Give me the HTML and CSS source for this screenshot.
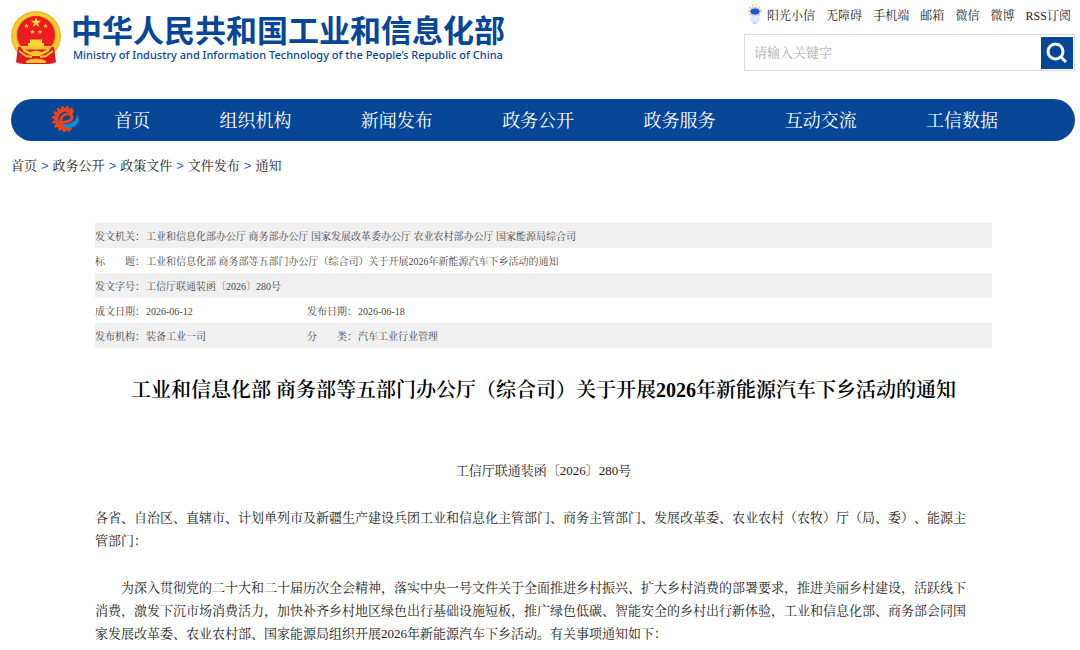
FILE: index.html
```html
<!DOCTYPE html>
<html lang="zh-CN">
<head>
<meta charset="utf-8">
<meta name="viewport" content="width=device-width, initial-scale=1">
<title>工业和信息化部 - 通知</title>
<link rel="stylesheet" href="styles.css">
</head>
<body>
<div class="page">
  <header class="header">
    <div class="brand">
      <svg class="emblem" viewBox="0 0 50 54" aria-hidden="true">
        <circle cx="25" cy="25" r="25" fill="#f0b91c"/>
        <circle cx="25" cy="25" r="22" fill="none" stroke="#f6cd35" stroke-width="3"/>
        <circle cx="25" cy="24" r="19" fill="#ed1c24"/>
        <path d="M7 36 5 51c3 2 7 2 11 2h17c4 0 9 0 12-2l-2-15z" fill="#e01a20"/>
        <g fill="#fbd535">
          <path d="m25 6 1.300 3.800h4l-3.200 2.400 1.200 3.900-3.300-2.400-3.300 2.400 1.200-3.900-3.200-2.400h4z"/>
          <path d="m15.500 12.500.7 1.700h1.800l-1.400 1.100.5 1.800-1.600-1.100-1.600 1.100.5-1.800-1.400-1.100h1.800zM34.500 12.500l.7 1.700H37l-1.400 1.100.5 1.800-1.600-1.100-1.600 1.100.5-1.800-1.400-1.100h1.800zM21.500 18.500l.7 1.700H24l-1.400 1.100.5 1.800-1.600-1.100-1.600 1.100.5-1.800-1.400-1.100h1.800zM29 18.500l.7 1.700h1.800l-1.400 1.100.5 1.800-1.600-1.100-1.600 1.100.5-1.800-1.400-1.100h1.800z"/>
          <path d="M19 28.500h12v3.500h2v3H17v-3h2z"/>
        </g>
        <path d="M9 35h32l-4 6-8 4h-8l-8-4z" fill="#f5c52d"/>
        <path d="M14 38.500h22l-5 2.500-6-1.500-6 1.500z" fill="#e01a20"/>
        <path d="m8 40 7 5 6 1M42 40l-7 5-6 1" fill="none" stroke="#f5c52d" stroke-width="2"/>
        <path d="M15 50c5-3 15-3 20 0v2H15z" fill="#f5c52d"/>
      </svg>
      <div class="brand-text">
        <div class="brand-name">中华人民共和国工业和信息化部</div>
        <div class="brand-en">Ministry of Industry and Information Technology of the People’s Republic of China</div>
      </div>
    </div>
    <div class="tools">
      <div class="quick-links">
        <a href="#" class="assistant">
          <svg class="robot" viewBox="0 0 14 22" aria-hidden="true">
            <circle cx="7" cy="7" r="6" fill="none" stroke="#f6cf66" stroke-width="2" stroke-dasharray="1.500 2"/>
            <path d="M3 11h8l1 5-3 4H5l-3-3z" fill="#dce9fb"/>
            <path d="m5 18 1 3 2-3" fill="#a9c9f5"/>
            <ellipse cx="7" cy="7.500" rx="5.500" ry="4.500" fill="#b8cff7"/>
            <ellipse cx="7" cy="7.500" rx="4.500" ry="3" fill="#2257cf"/>
          </svg>阳光小信</a>
        <a href="#">无障碍</a>
        <a href="#">手机端</a>
        <a href="#">邮箱</a>
        <a href="#">微信</a>
        <a href="#">微博</a>
        <a href="#">RSS订阅</a>
      </div>
      <form class="search">
        <input class="search-input" type="text" placeholder="请输入关键字" aria-label="请输入关键字">
        <button class="search-button" type="button" aria-label="搜索">
          <svg class="search-icon" viewBox="0 0 22 22" aria-hidden="true"><circle cx="9.500" cy="9.500" r="7.500"/><path d="m15 15 5 5"/></svg>
        </button>
      </form>
    </div>
  </header>

  <nav class="nav">
    <svg class="nav-logo" viewBox="0 0 28 28" aria-hidden="true">
      <path d="M20.500 5.500A11.300 11.300 0 1 0 19 23.500" fill="none" stroke="#e8451d" stroke-width="3.500" stroke-dasharray="2.600 2"/>
      <path d="M21 8a9.500 9.500 0 1 0-2 14" fill="none" stroke="#e8451d" stroke-width="4"/>
      <path d="M9 17c5 1 11-1 11-5 0-5-9-4-11 2-2 6 3 9 9 8" fill="none" stroke="#e8451d" stroke-width="3"/>
      <path d="M11 19c7 1 14-3 14-9 5 5-1 13-8 13-4 0-6-1-6-4z" fill="#168bd3"/>
    </svg>
    <a href="#">首页</a>
    <a href="#">组织机构</a>
    <a href="#">新闻发布</a>
    <a href="#">政务公开</a>
    <a href="#">政务服务</a>
    <a href="#">互动交流</a>
    <a href="#">工信数据</a>
  </nav>

  <div class="breadcrumb">
    <a href="#">首页</a><span class="sep">&gt;</span><a href="#">政务公开</a><span class="sep">&gt;</span><a href="#">政策文件</a><span class="sep">&gt;</span><a href="#">文件发布</a><span class="sep">&gt;</span><a href="#">通知</a>
  </div>

  <main class="article">
    <table class="meta">
      <colgroup><col class="col-label"><col class="col-value"><col class="col-label"><col></colgroup>
      <tr><th>发文机关：</th><td colspan="3">工业和信息化部办公厅 商务部办公厅 国家发展改革委办公厅 农业农村部办公厅 国家能源局综合司</td></tr>
      <tr><th>标　　题：</th><td colspan="3">工业和信息化部 商务部等五部门办公厅（综合司）关于开展2026年新能源汽车下乡活动的通知</td></tr>
      <tr><th>发文字号：</th><td colspan="3">工信厅联通装函〔2026〕280号</td></tr>
      <tr><th>成文日期：</th><td>2026-06-12</td><th>发布日期：</th><td>2026-06-18</td></tr>
      <tr><th>发布机构：</th><td>装备工业一司</td><th>分　　类：</th><td>汽车工业行业管理</td></tr>
    </table>
    <h1 class="title">工业和信息化部 商务部等五部门办公厅（综合司）关于开展2026年新能源汽车下乡活动的通知</h1>
    <p class="doc-number">工信厅联通装函〔2026〕280号</p>
    <div class="content">
      <p>各省、自治区、直辖市、计划单列市及新疆生产建设兵团工业和信息化主管部门、商务主管部门、发展改革委、农业农村（农牧）厅（局、委）、能源主管部门：</p>
      <p class="indent">为深入贯彻党的二十大和二十届历次全会精神，落实中央一号文件关于全面推进乡村振兴、扩大乡村消费的部署要求，推进美丽乡村建设，活跃线下消费，激发下沉市场消费活力，加快补齐乡村地区绿色出行基础设施短板，推广绿色低碳、智能安全的乡村出行新体验，工业和信息化部、商务部会同国家发展改革委、农业农村部、国家能源局组织开展2026年新能源汽车下乡活动。有关事项通知如下：</p>
    </div>
  </main>
</div>
</body>
</html>
```
FILE: styles.css
```css
* { box-sizing: border-box; }
body {
  margin: 0;
  background: #fff;
  color: #222;
  font-family: "Liberation Serif", "Noto Serif CJK SC", "Noto Sans CJK SC", serif;
  text-spacing-trim: space-all;
}
a { color: inherit; text-decoration: none; }
.page { padding: 0 5px 0 11px; }
.header {
  display: flex;
  justify-content: space-between;
  align-items: flex-start;
}
.brand { display: flex; gap: 10px; padding-top: 11px; }
.emblem { width: 50px; height: 54px; flex: none; }
.brand-text { color: #054796; white-space: nowrap; }
.brand-name {
  font: bold 31px/36px "Noto Sans CJK SC", sans-serif;
}
.brand-en { padding-left: 2px; font: 500 11px/16px "Noto Sans", sans-serif; }
.tools { width: 331px; padding-top: 4px; }
.quick-links {
  display: flex;
  justify-content: space-between;
  align-items: center;
  height: 22px;
  padding: 0 4px;
  font-size: 12px;
  white-space: nowrap;
}
.assistant { display: flex; align-items: center; gap: 5px; }
.robot { width: 14px; height: 22px; }
.search {
  display: flex;
  align-items: center;
  height: 37px;
  margin-top: 8px;
  padding-right: 1px;
  border: 1px solid #ddd;
}
.search-input {
  flex: 1;
  min-width: 0;
  padding: 0 9px;
  border: 0;
  outline: 0;
  background: none;
  font: inherit;
  font-size: 13px;
}
.search-input::placeholder { color: #aaa; }
.search-button {
  display: flex;
  align-items: center;
  justify-content: center;
  width: 32px;
  height: 32px;
  padding: 0;
  border: 0;
  background: #054796;
}
.search-icon { width: 22px; height: 22px; fill: none; stroke: #fff; stroke-width: 3; }
.nav {
  display: flex;
  align-items: center;
  justify-content: space-between;
  height: 42px;
  margin-top: 28px;
  padding: 0 77px 2px 41px;
  border-radius: 21px;
  background: #054796;
  color: #fff;
  font-size: 18px;
}
.nav-logo { width: 28px; height: 28px; margin-right: -35px; }
.breadcrumb { margin-top: 15px; font-size: 13px; line-height: 20px; }
.sep { margin: 0 4px; color: #2a6cc0; font-family: "Liberation Sans", sans-serif; }
.article { padding: 0 83px 0 84px; }
.meta {
  width: 100%;
  margin-top: 47px;
  border-collapse: collapse;
  table-layout: fixed;
  color: #444;
  font-size: 10px;
  line-height: 15px;
}
.col-label { width: 51px; }
.col-value { width: 161px; }
.meta th, .meta td {
  height: 25px;
  padding: 2px 0 0;
  font-weight: normal;
  text-align: left;
  white-space: nowrap;
}
.meta tr:nth-child(odd) { background: #f0f0f0; }
.title {
  margin: 27px 0 0;
  color: #000;
  font-size: 20px;
  font-weight: 600;
  line-height: 30px;
  text-align: center;
}
.doc-number {
  margin: 54px 0 0;
  font-size: 13px;
  line-height: 23px;
  text-align: center;
}
.content { padding: 24px 20px 0 0; font-size: 13px; line-height: 23px; }
.content p { margin: 0 0 24px; }
.indent { text-indent: 2em; }
```
